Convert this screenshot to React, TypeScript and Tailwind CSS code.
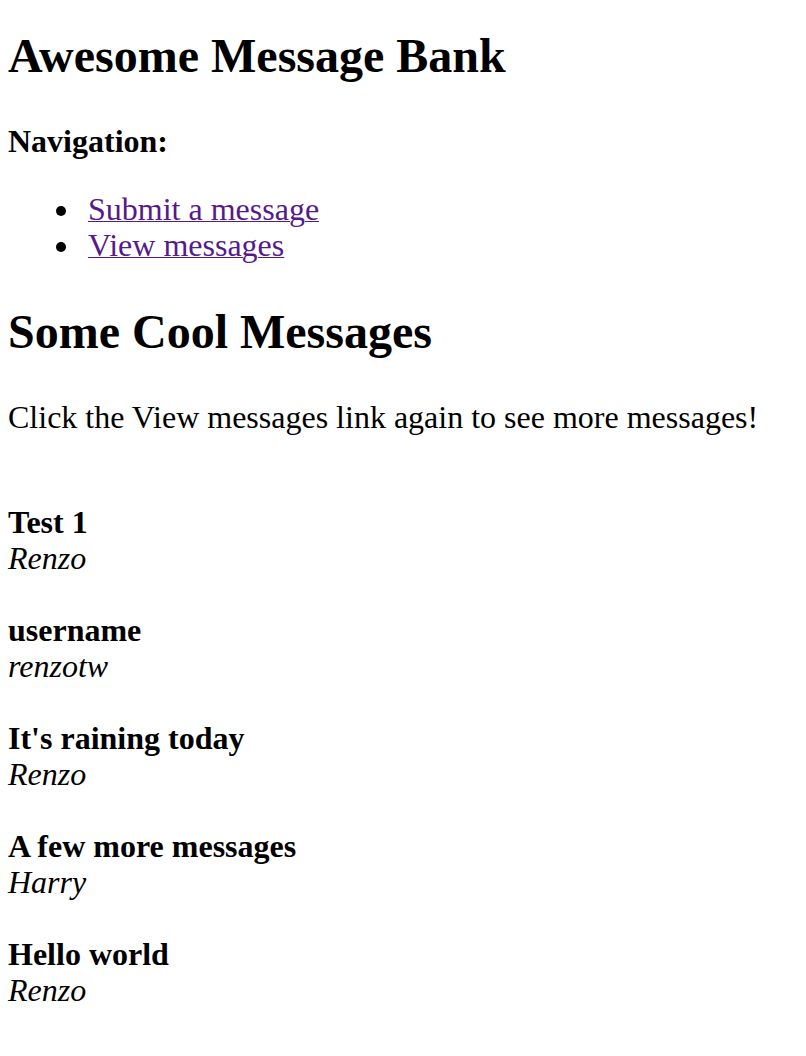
const messages = [
  { title: 'Test 1', author: 'Renzo' },
  { title: 'username', author: 'renzotw' },
  { title: "It's raining today", author: 'Renzo' },
  { title: 'A few more messages', author: 'Harry' },
  { title: 'Hello world', author: 'Renzo' },
];

const links = ['Submit a message', 'View messages'];

export default function App() {
  return (
    <div className="min-h-screen bg-white px-2 pt-[28px] text-black font-['Liberation_Serif','Times_New_Roman',serif] text-[32px] leading-[36px]">
      <h1 className="text-[48px] leading-[55px] font-bold">Awesome Message Bank</h1>

      <h3 className="mt-[40px] font-bold">Navigation:</h3>
      <ul className="mt-[32px] pl-[48px]">
        {links.map((l) => (
          <li key={l} className="flex items-start gap-[22px]">
            <span className="mt-[15px] h-[10px] w-[10px] shrink-0 rounded-full bg-black" />
            <a href="#" className="text-[#551a8b] underline decoration-1">
              {l}
            </a>
          </li>
        ))}
      </ul>

      <h2 className="mt-[41px] text-[48px] leading-[55px] font-bold">Some Cool Messages</h2>
      <p className="mt-[40px]">Click the View messages link again to see more messages!</p>

      <div className="mt-[69px] flex flex-col gap-[36px]">
        {messages.map((m, i) => (
          <p key={i}>
            <b>{m.title}</b>
            <br />
            <i>{m.author}</i>
          </p>
        ))}
      </div>
    </div>
  );
}
